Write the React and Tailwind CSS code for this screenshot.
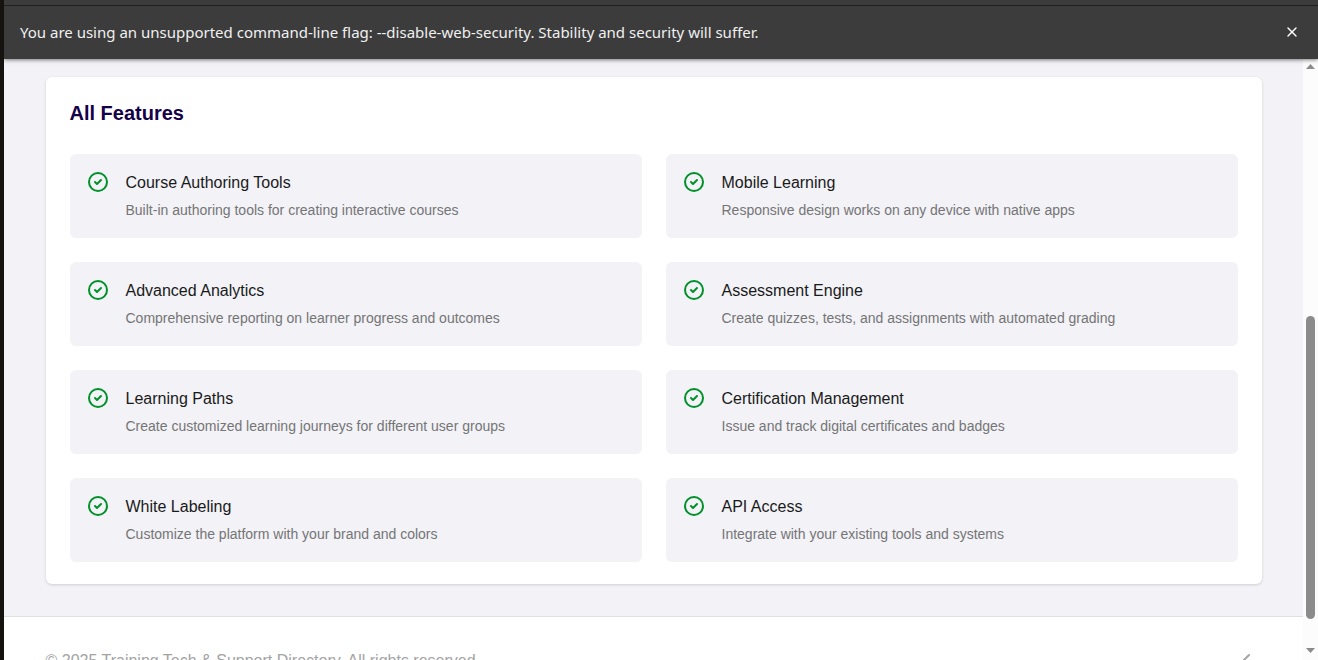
import { useState } from 'react'
import { ChevronLeft, X } from 'lucide-react'

const features = [
  { title: 'Course Authoring Tools', text: 'Built-in authoring tools for creating interactive courses' },
  { title: 'Mobile Learning', text: 'Responsive design works on any device with native apps' },
  { title: 'Advanced Analytics', text: 'Comprehensive reporting on learner progress and outcomes' },
  { title: 'Assessment Engine', text: 'Create quizzes, tests, and assignments with automated grading' },
  { title: 'Learning Paths', text: 'Create customized learning journeys for different user groups' },
  { title: 'Certification Management', text: 'Issue and track digital certificates and badges' },
  { title: 'White Labeling', text: 'Customize the platform with your brand and colors' },
  { title: 'API Access', text: 'Integrate with your existing tools and systems' },
]

function CheckIcon() {
  return (
    <svg viewBox="0 0 24 24" fill="none" stroke="currentColor" strokeWidth="2" strokeLinecap="round" strokeLinejoin="round" className="size-6 shrink-0 text-[#00912b]" aria-hidden="true">
      <path d="M9 12l2 2 4-4m6 2a9 9 0 11-18 0 9 9 0 0118 0z" />
    </svg>
  )
}

function FeatureItem({ title, text }) {
  return (
    <li className="flex items-start gap-4 rounded-md bg-[#f2f2f7] p-4">
      <CheckIcon />
      <div className="min-w-0">
        <h3 className="text-base leading-[26px] text-[#1a1a1a]">{title}</h3>
        <p className="mt-[2px] text-sm leading-6 text-[#757575]">{text}</p>
      </div>
    </li>
  )
}

function InfoBar({ onClose }) {
  return (
    <div className="relative z-10 shrink-0 bg-[#3c3c3c] pt-[5px] shadow-[0_1px_4px_rgba(0,0,0,0.5)]">
      <div className="flex items-center justify-between border-t border-[#1f1f1f] pt-[14px] pr-[18px] pb-[15px] pl-4">
        <p className="font-['Noto_Sans',sans-serif] text-[15px] leading-6 text-[#f0f0f0]">
          You are using an unsupported command-line flag: --disable-web-security. Stability and security will suffer.
        </p>
        <button type="button" aria-label="Close" onClick={onClose} className="text-white">
          <X size={16} strokeWidth={2} />
        </button>
      </div>
    </div>
  )
}

function Scrollbar() {
  return (
    <div className="flex w-[15px] shrink-0 flex-col items-center bg-[#fcfcfc] pt-[5px] pb-[7px]" aria-hidden="true">
      <svg viewBox="0 0 9 5" className="h-[5px] w-[9px] fill-[#8b8b8b]"><path d="M0 5L4.500 0L9 5z" /></svg>
      <div className="flex-[247]" />
      <div className="w-[9px] flex-[302] rounded-full bg-[#8b8b8b]" />
      <div className="flex-[29]" />
      <svg viewBox="0 0 9 5" className="h-[5px] w-[9px] fill-[#8b8b8b]"><path d="M0 0L4.500 5L9 0z" /></svg>
    </div>
  )
}

export default function App() {
  const [showBar, setShowBar] = useState(true)

  return (
    <div className="flex h-screen flex-col overflow-hidden border-l-4 border-[#14130f] bg-[#f2f2f7] font-['Liberation_Sans',sans-serif]">
      {showBar && <InfoBar onClose={() => setShowBar(false)} />}

      <div className="flex min-h-0 flex-1">
        <div className="min-w-0 flex-1 overflow-hidden">
          {/* Features */}
          <main className="mx-auto max-w-7xl px-8 pt-[18px] pb-8">
            <section className="rounded-md bg-white px-6 pt-6 pb-[22px] shadow-[0_1px_3px_rgba(0,0,0,0.15)]">
              <h2 className="mb-[29px] text-xl leading-6 font-bold text-[#160048]">All Features</h2>
              <ul className="grid grid-cols-2 gap-6">
                {features.map(f => <FeatureItem key={f.title} {...f} />)}
              </ul>
            </section>
          </main>

          {/* Footer */}
          <footer className="border-t border-[#e0e0e0] bg-white">
            <div className="mx-auto flex max-w-7xl justify-between px-8 py-8 text-[#a3a3a3]">
              <p className="text-base leading-6">© 2025 Training Tech &amp; Support Directory. All rights reserved.</p>
              <a href="#top" aria-label="Back" className="px-1">
                <ChevronLeft size={24} />
              </a>
            </div>
          </footer>
        </div>
        <Scrollbar />
      </div>
    </div>
  )
}
